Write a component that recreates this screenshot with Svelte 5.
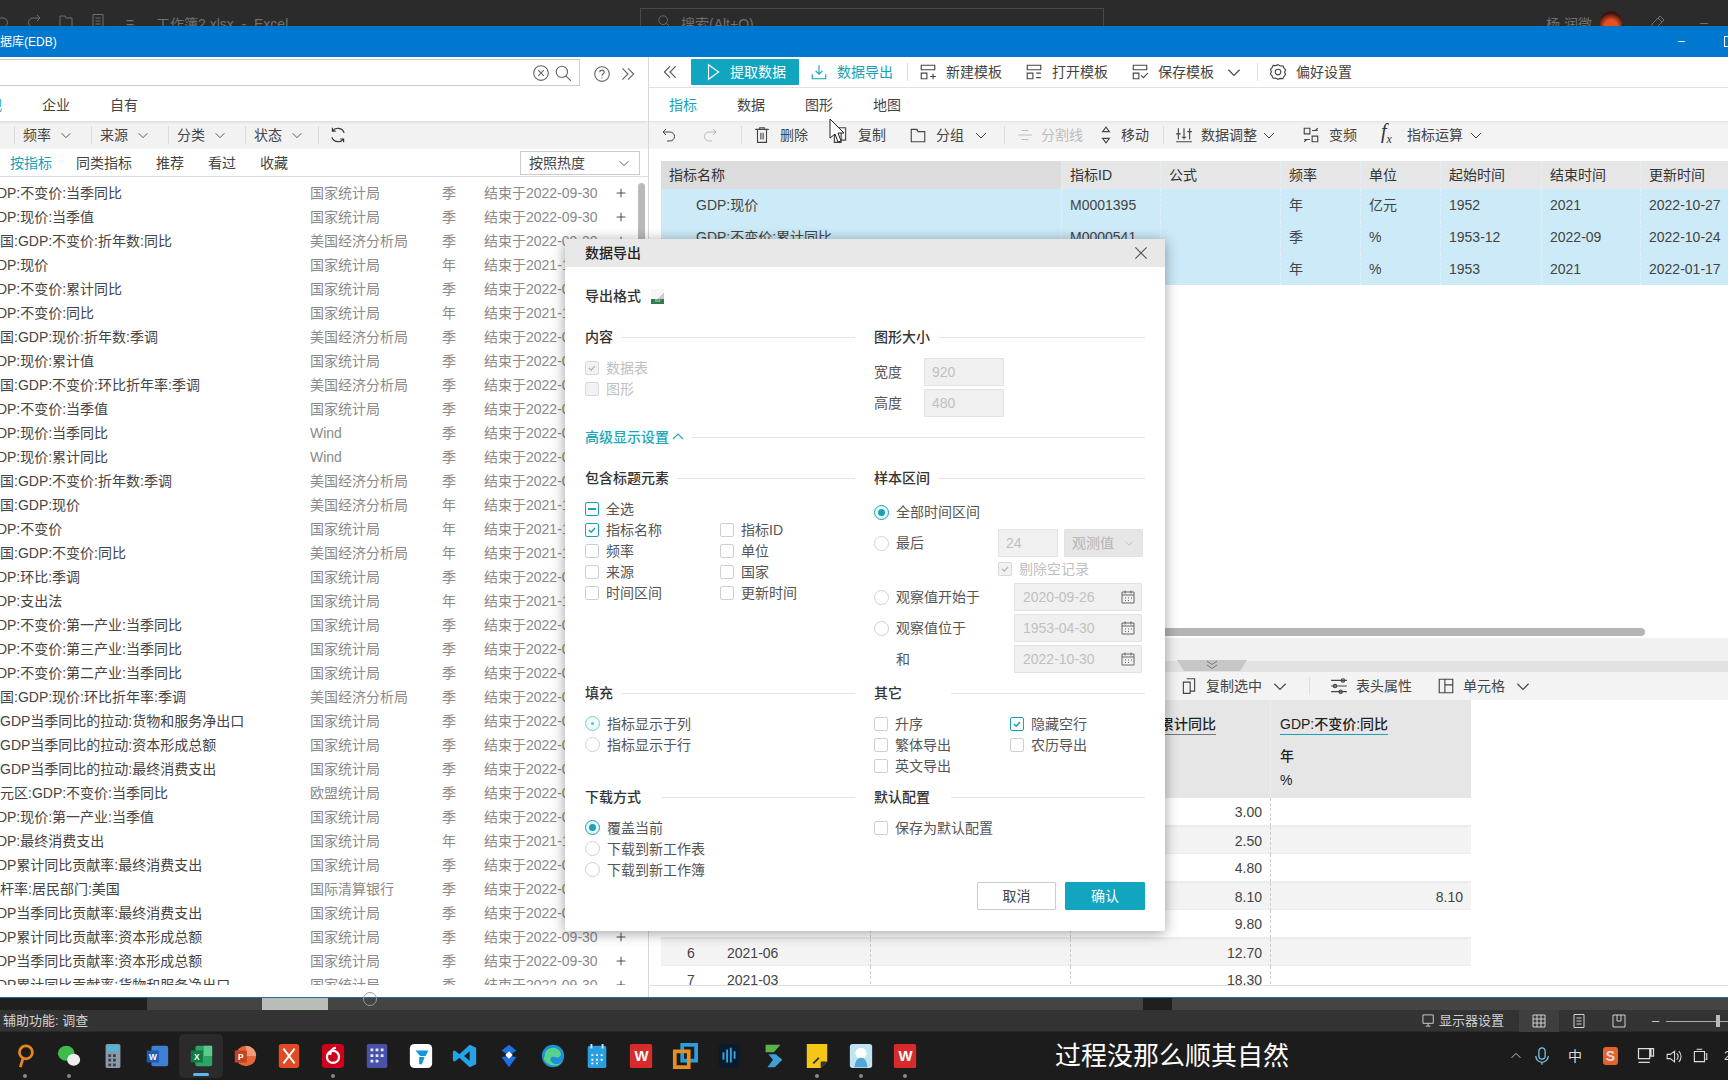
<script>
  const guo = '国家统计局', mei = '美国经济分析局';
  const names = [
    ['GDP:不变价:当季同比',guo,'季'],['GDP:现价:当季值',guo,'季'],['美国:GDP:不变价:折年数:同比',mei,'季'],['GDP:现价',guo,'年'],
    ['GDP:不变价:累计同比',guo,'季'],['GDP:不变价:同比',guo,'年'],['美国:GDP:现价:折年数:季调',mei,'季'],['GDP:现价:累计值',guo,'季'],
    ['美国:GDP:不变价:环比折年率:季调',mei,'季'],['GDP:不变价:当季值',guo,'季'],['GDP:现价:当季同比','Wind','季'],['GDP:现价:累计同比','Wind','季'],
    ['美国:GDP:不变价:折年数:季调',mei,'季'],['美国:GDP:现价',mei,'年'],['GDP:不变价',guo,'年'],['美国:GDP:不变价:同比',mei,'年'],
    ['GDP:环比:季调',guo,'季'],['GDP:支出法',guo,'年'],['GDP:不变价:第一产业:当季同比',guo,'季'],['GDP:不变价:第三产业:当季同比',guo,'季'],
    ['GDP:不变价:第二产业:当季同比',guo,'季'],['美国:GDP:现价:环比折年率:季调',mei,'季'],['GDP当季同比的拉动:货物和服务净出口',guo,'季',1],
    ['GDP当季同比的拉动:资本形成总额',guo,'季',1],['GDP当季同比的拉动:最终消费支出',guo,'季',1],['欧元区:GDP:不变价:当季同比','欧盟统计局','季'],
    ['GDP:现价:第一产业:当季值',guo,'季'],['GDP:最终消费支出',guo,'年'],['GDP累计同比贡献率:最终消费支出',guo,'季'],['杠杆率:居民部门:美国','国际清算银行','季'],
    ['GDP当季同比贡献率:最终消费支出',guo,'季'],['GDP累计同比贡献率:资本形成总额',guo,'季'],['GDP当季同比贡献率:资本形成总额',guo,'季'],['GDP累计同比贡献率:货物和服务净出口',guo,'季']
  ];
  const selRows = [
    ['GDP:现价','M0001395','','年','亿元','1952','2021','2022-10-27'],
    ['GDP:不变价:累计同比','M0000541','','季','%','1953-12','2022-09','2022-10-24'],
    ['GDP:不变价:同比','M0001396','','年','%','1953','2021','2022-01-17']
  ];
  const dataRows = [
    [1,'2022-09','3.00',''],[2,'2022-06','2.50',''],[3,'2022-03','4.80',''],[4,'2021-12','8.10','8.10'],
    [5,'2021-09','9.80',''],[6,'2021-06','12.70',''],[7,'2021-03','18.30','']
  ];
  const P = {
    chev:'M3 6l5 5 5-5', chevUp:'M3 10l5-5 5 5',
    back:'M8 3L3 8l5 5M13 3L8 8l5 5', fwd:'M3 3l5 5-5 5M8 3l5 5-5 5',
    play:'M4 1.500l9 6.500-9 6.500z', down:'M8 2v8M5 7l3 3 3-3M2 10v4h12v-4',
    newT:'M2 2h12v4H2zM2 9h5v5H2zM10 12h5M12.500 9.500v5', openT:'M2 2h12v4H2zM2 9h5v5H2zM10 9h4M10 13h4',
    saveT:'M2 2h12v4H2zM2 9h5v5H2zM9 11l2 2 4-4',
    gear:'M8 1.500l2 1.200 2.300-.2 1 2 1.500 1.700-1 2 1 2-1.500 1.700-1 2-2.300-.2L8 14.500l-2-1.200-2.300.2-1-2L1.200 9.800l1-2-1-2 1.500-1.700 1-2 2.300.2zM8 5.500a2.500 2.500 0 100 5 2.500 2.500 0 000-5z',
    undo:'M5 2L2 5l3 3M2 5h7a4 4 0 010 9H6', redo:'M11 2l3 3-3 3M14 5H7a4 4 0 000 9h3',
    trash:'M2 3h12M6 3V1.500h4V3M4 3v11.500h8V3M7 6v6M9 6v6', copy:'M6 1.500h7v11H9M3 4.500h6v10H3z',
    folder:'M2 3h5l1 2h6v9H2z', split:'M2 8h12M5 4h6M5 12h6', move:'M8 1L5 5h6zM8 15l-3-4h6z',
    adjust:'M3 2v10M8 2v10M13 2v10M1 7h4M6 10h4M11 5h4M1 14h14', freq:'M2 2h5v5H2zM9 9h5v5H9zM9 4h5M2 12h5M12 4l2-2M4 12l-2 2',
    sliders:'M1 3h14M1 8h14M1 13h14M10 3a1.500 1.500 0 113 0 1.500 1.500 0 01-3 0zM3 8a1.500 1.500 0 113 0 1.500 1.500 0 01-3 0zM8 13a1.500 1.500 0 113 0 1.500 1.500 0 01-3 0z',
    cell:'M2 2h12v12H2zM7 2v12M7 7h7', refresh:'M13.500 6A6 6 0 003 4.500M2.500 10A6 6 0 0013 11.500M3 1.500v3h3M13 14.500v-3h-3',
    search:'M7 2a5 5 0 100 10A5 5 0 007 2zM10.500 10.500L15 15', clear:'M8 1.500a6.500 6.500 0 100 13 6.500 6.500 0 000-13zM5.500 5.500l5 5M10.500 5.500l-5 5',
    help:'M8 1.500a6.500 6.500 0 100 13 6.500 6.500 0 000-13zM6 6.500a2 2 0 114 0c0 1.200-2 1.500-2 3M8 11v1', close:'M3 3l10 10M13 3L3 13',
    cal:'M2 3h12v11H2zM2 6h12M5 1.500v3M11 1.500v3M5 9h1M8 9h1M11 9h1M5 11.500h1M8 11.500h1',
    plus:'M8 3v10M3 8h10', grid:'M2 2h12v12H2zM2 6h12M2 10h12M6 2v12M10 2v12', page:'M3 1.500h10v13H3zM5.500 5h5M5.500 8h5M5.500 11h5', book:'M2 2h12v12H2zM6 2v6h4V2',
    monitor:'M1 2h11v9H1zM4 14h5M6.500 11v3', mon2:'M2 2h9v8H2zM2 13h9M12 2h2v6h-2z', spk:'M2 6h3l4-3v10l-4-3H2zM11 5a4 4 0 010 6M13 3a7 7 0 010 10', batt:'M3 4h9v9H3zM5 2h5M13 6h1v5h-1', mic:'M8 1.500a2.500 2.500 0 00-2.500 2.500v4a2.500 2.500 0 005 0V4A2.500 2.500 0 008 1.500zM3 8a5 5 0 0010 0M8 13v2',
    pen:'M10 2l4 4-8 8H2v-4zM8 4l4 4', qsearch:'M7 2a5 5 0 100 10A5 5 0 007 2zM10.500 10.500L15 15'
  };
</script>

{#snippet ic(n, s = 16)}
  <svg class="ic" width={s} height={s} viewBox="0 0 16 16"><path d={P[n]} /></svg>
{/snippet}
{#snippet tool(n, label, cls = '')}
  <span class="tool {cls}">{@render ic(n, 18)}<span>{label}</span></span>
{/snippet}
{#snippet fx()}
  <span class="tool fxt"><i class="fx">f<sub>x</sub></i><span>指标运算</span></span>
{/snippet}
{#snippet cb(label, state = '', dis = false)}
  <label class="opt" class:dis><span class="box {state}" class:disb={dis}>
    {#if state === 'on'}<svg viewBox="0 0 12 12"><path d="M3 6l2.200 2.200L9 4" /></svg>{/if}
    {#if state === 'mix'}<b></b>{/if}
  </span>{label}</label>
{/snippet}
{#snippet rd(label, on = '')}
  <label class="opt"><span class="radio {on}"></span>{label}</label>
{/snippet}
{#snippet sec(t, cls = '')}
  <div class="sec {cls}"><span>{t}</span><i></i></div>
{/snippet}
{#snippet date(v)}
  <span class="inp date"><span>{v}</span>{@render ic('cal', 16)}</span>
{/snippet}

<div class="screen">
  <header class="xl">
    <span class="qa">{@render ic('undo')}{@render ic('redo')}{@render ic('folder')}{@render ic('page')}<span class="eq">=</span></span>
    <span class="fn">工作簿2.xlsx  -  Excel</span>
    <span class="xsearch">{@render ic('qsearch', 14)}<span>搜索(Alt+Q)</span></span>
    <span class="user">杨 润微</span><span class="avatar"></span>
    <span class="pen">{@render ic('pen')}</span><span class="min">–</span>
  </header>

  <div class="titlebar">
    <span class="ttl">数据库(EDB)</span>
    <span class="winbtn">–</span><span class="restore"></span>
  </div>

  <main class="win">
    <section class="left">
      <div class="searchrow">
        <div class="searchbox">{@render ic('clear', 18)}{@render ic('search', 18)}</div>
        <span class="hicon">{@render ic('help', 18)}</span><span class="hicon fw">{@render ic('fwd', 18)}</span>
      </div>
      <nav class="ltabs"><span class="cur">观</span><span>企业</span><span>自有</span></nav>
      <div class="filters">
        {#each ['频率','来源','分类','状态'] as f}
          <span class="filter">{f}{@render ic('chev', 14)}</span>
        {/each}
        <span class="refresh">{@render ic('refresh', 18)}</span>
      </div>
      <div class="subtabs">
        <span class="cur">按指标</span><span>同类指标</span><span>推荐</span><span>看过</span><span>收藏</span>
        <span class="sortsel">按照热度{@render ic('chev', 14)}</span>
      </div>
      <div class="list">
        {#each names as r}
          <div class="lrow">
            <span class="n" class:shift={r[3]}>{r[0]}</span>
            <span>{r[1]}</span><span>{r[2]}</span>
            <span>结束于{r[2] === '年' ? '2021-12-31' : '2022-09-30'}</span>
            <span class="pl">{@render ic('plus', 14)}</span>
          </div>
        {/each}
        <span class="lthumb"></span>
      </div>
    </section>

    <section class="right">
      <div class="tb1">
        <span class="backb">{@render ic('back', 18)}</span>
        <span class="fetch">{@render ic('play', 18)}提取数据</span>
        <span class="tool teal">{@render ic('down', 18)}<span>数据导出</span></span>
        <i class="vs"></i>
        {@render tool('newT','新建模板')}
        {@render tool('openT','打开模板')}
        {@render tool('saveT','保存模板')}
        <span class="chv">{@render ic('chev', 18)}</span>
        <i class="vs"></i>
        {@render tool('gear','偏好设置')}
      </div>
      <nav class="rtabs"><span class="cur">指标</span><span>数据</span><span>图形</span><span>地图</span></nav>
      <div class="tb2">
        <span class="undo">{@render ic('undo')}</span><span class="redo">{@render ic('redo')}</span>
        <i class="vs"></i>
        {@render tool('trash','删除')}
        {@render tool('copy','复制')}
        {@render tool('folder','分组')}
        <span class="chv c1">{@render ic('chev')}</span>
        <i class="vs"></i>
        {@render tool('split','分割线','off')}
        {@render tool('move','移动','mv')}
        <i class="vs"></i>
        {@render tool('adjust','数据调整','adj')}
        <span class="chv c2">{@render ic('chev')}</span>
        {@render tool('freq','变频')}
        {@render fx()}
        <span class="chv c3">{@render ic('chev')}</span>
      </div>

      <div class="seltable">
        <div class="srow head">
          <span class="first">指标名称</span><span>指标ID</span><span>公式</span><span>频率</span><span>单位</span><span>起始时间</span><span>结束时间</span><span>更新时间</span>
        </div>
        {#each selRows as r}
          <div class="srow sel2">
            <span class="nm">{r[0]}</span>
            {#each r.slice(1) as c}<span>{c}</span>{/each}
          </div>
        {/each}
      </div>

      <div class="hscroll"><i></i></div>
      <div class="splitter"><span class="grip"><svg width="14" height="10" viewBox="0 0 14 10"><path d="M2 1l5 3.500L12 1M2 5l5 3.500L12 5" /></svg></span></div>
      <div class="tb3">
        {@render tool('copy','复制选中')}
        <span class="chv">{@render ic('chev', 18)}</span>
        <i class="vs"></i>
        {@render tool('sliders','表头属性')}
        {@render tool('cell','单元格')}
        <span class="chv">{@render ic('chev', 18)}</span>
      </div>
      <div class="datatable">
        <div class="drow dhead">
          <span></span><span></span><span></span>
          <span class="hcell"><u>GDP:不变价:累计同比</u><em>季</em><em>%</em></span>
          <span class="hcell"><u class="act">GDP:不变价:同比</u><em>年</em><em>%</em></span>
        </div>
        {#each dataRows as r, i}
          <div class="drow body" class:alt={i % 2 === 1}>
            <span class="idx">{r[0]}</span><span>{r[1]}</span><span></span>
            <span class="num">{r[2]}</span><span class="num">{r[3]}</span>
          </div>
        {/each}
      </div>
    </section>
  </main>

  <div class="strip">
    <i class="s1"></i><i class="s2"><b></b><em></em></i><i class="s3"></i><i class="s4"></i>
  </div>

  <div class="status">
    <span class="acc">辅助功能: 调查</span>
    <span class="disp">{@render ic('monitor', 15)}显示器设置</span>
    <span class="view on">{@render ic('grid', 16)}</span><span class="view">{@render ic('page', 16)}</span><span class="view">{@render ic('book', 16)}</span>
    <span class="zoom"><b>–</b><i></i><em></em></span>
  </div>

  <footer class="task">
    <div class="apps">
      <span class="app dot"><svg viewBox="0 0 28 28"><circle cx="15" cy="10" r="7" fill="none" stroke="#e8861e" stroke-width="3"/><path d="M12 16l-3 10" stroke="#e8861e" stroke-width="3"/></svg></span>
      <span class="app dot"><svg viewBox="0 0 28 28"><ellipse cx="11" cy="11" rx="9" ry="8" fill="#3dbb4b"/><ellipse cx="19" cy="18" rx="7" ry="6.500" fill="#eee"/></svg></span>
      <span class="app"><svg viewBox="0 0 28 28"><rect x="6" y="1" width="16" height="26" rx="2" fill="#8b9aa6"/><rect x="8" y="3" width="12" height="6" fill="#49b8e0"/><path d="M9 12h3v3H9zM14 12h3v3h-3zM9 17h3v3H9zM14 17h3v3h-3zM9 22h3v3H9zM14 22h3v3h-3z" fill="#3a3f44"/></svg></span>
      <span class="app"><svg viewBox="0 0 28 28"><rect x="8" y="3" width="18" height="22" rx="2" fill="#3f7fd6"/><rect x="3" y="8" width="13" height="13" fill="#1c5cb5"/><text x="9.500" y="18" class="lt">W</text></svg></span>
      <span class="app active"><svg viewBox="0 0 28 28"><rect x="8" y="3" width="18" height="22" rx="2" fill="#2aa566"/><rect x="17" y="3" width="9" height="11" fill="#5cc98d"/><rect x="3" y="8" width="13" height="13" fill="#107c41"/><text x="9.500" y="18" class="lt">X</text></svg></span>
      <span class="app"><svg viewBox="0 0 28 28"><circle cx="15" cy="14" r="11" fill="#e2683a"/><path d="M15 3a11 11 0 0111 11H15z" fill="#f09a79"/><rect x="3" y="8" width="13" height="13" fill="#c3421f"/><text x="9.500" y="18" class="lt">P</text></svg></span>
      <span class="app"><svg viewBox="0 0 28 28"><rect x="3" y="1" width="22" height="26" rx="3" fill="#e04a24"/><path d="M8 6l12 16M20 6L8 22" stroke="#fff" stroke-width="2" fill="none"/></svg></span>
      <span class="app dot"><svg viewBox="0 0 28 28"><rect x="2" y="1" width="24" height="26" rx="4" fill="#d0021b"/><circle cx="14" cy="15" r="6.500" fill="none" stroke="#fff" stroke-width="2.400"/><path d="M17 5c-4 1-6 4-6 8" stroke="#fff" stroke-width="2.400" fill="none"/></svg></span>
      <span class="app"><svg viewBox="0 0 28 28"><rect x="3" y="1" width="22" height="26" rx="2" fill="#4752a8"/><path d="M7 6h3v3H7zM12.500 6h3v3h-3zM18 6h3v3h-3zM7 12h3v3H7zM12.500 12h3v3h-3zM18 12h3v3h-3zM7 18h3v3H7zM12.500 18h3v3h-3z" fill="#e6e8f5"/></svg></span>
      <span class="app"><svg viewBox="0 0 28 28"><rect x="2" y="1" width="24" height="26" rx="5" fill="#fff"/><path d="M8 8h14l-3 6h-6zM12 15h6l-3 8h-3z" fill="#1296db"/></svg></span>
      <span class="app"><svg viewBox="0 0 28 28"><path d="M19 2l7 3v18l-7 3-11-10-5 4-2-1V9l2-1 5 4zM19 9l-6 5 6 5z" fill="#23a3e8"/></svg></span>
      <span class="app"><svg viewBox="0 0 28 28"><path d="M14 2l8 6-8 6-8-6zM6 15l8-1 8 1-8 11z" fill="#1e6fe0"/><path d="M14 9l4 4-4 4-4-4z" fill="#fff"/></svg></span>
      <span class="app"><svg viewBox="0 0 28 28"><circle cx="14" cy="14" r="12" fill="#1f8fd6"/><path d="M5 14a9 9 0 0117-4c2 4-2 7-6 5-4-1-7 2-3 6 3 3 9 2 12-2a12 12 0 01-21-2z" fill="#56d48c"/></svg></span>
      <span class="app"><svg viewBox="0 0 28 28"><rect x="4" y="3" width="20" height="24" rx="2" fill="#2a9fe0"/><path d="M8 1v5M20 1v5" stroke="#cfe9f8" stroke-width="2"/><path d="M8 12h2v2H8zM13 12h2v2h-2zM18 12h2v2h-2zM8 17h2v2H8zM13 17h2v2h-2zM18 17h2v2h-2zM8 21h2v2H8zM13 21h2v2h-2z" fill="#fff"/></svg></span>
      <span class="app"><svg viewBox="0 0 28 28"><rect x="2" y="1" width="24" height="26" rx="2" fill="#d92b2b"/><text x="7" y="19" class="lt big">W</text></svg></span>
      <span class="app"><svg viewBox="0 0 28 28"><rect x="11" y="2" width="15" height="17" fill="none" stroke="#2a9fe0" stroke-width="4"/><rect x="3" y="9" width="15" height="17" fill="none" stroke="#e8901e" stroke-width="4"/></svg></span>
      <span class="app"><svg viewBox="0 0 28 28"><rect x="3" y="1" width="22" height="26" rx="4" fill="#0c1a2e"/><path d="M8 10v8M12 7v14M16 5v16M20 9v8" stroke="#32a7e0" stroke-width="2"/></svg></span>
      <span class="app"><svg viewBox="0 0 28 28"><path d="M6 2h16l-7 8H6z" fill="#5db04a"/><path d="M9 12h8l7 6-8 8H8l6-8z" fill="#3d9fd6"/></svg></span>
      <span class="app dot"><svg viewBox="0 0 28 28"><path d="M3 1h22v19l-7 7H3z" fill="#f5c518"/><path d="M18 27v-7h7z" fill="#333"/><path d="M10 22l6-6" stroke="#333" stroke-width="2"/></svg></span>
      <span class="app dot"><svg viewBox="0 0 28 28"><rect x="2" y="1" width="24" height="26" rx="3" fill="#bfe4f4"/><circle cx="14" cy="11" r="6" fill="#fff"/><path d="M7 26c1-8 4-10 7-10s6 2 7 10z" fill="#55a6d6"/></svg></span>
      <span class="app dot"><svg viewBox="0 0 28 28"><rect x="2" y="1" width="24" height="26" rx="2" fill="#d92b2b"/><text x="7" y="19" class="lt big">W</text></svg></span>
    </div>
    <span class="sub">过程没那么顺其自然</span>
    <div class="tray">
      {@render ic('chevUp', 14)}
      <span class="micic">{@render ic('mic', 20)}</span>
      <span class="zh">中</span>
      <span class="sogou">S</span>
      {@render ic('mon2', 20)}{@render ic('spk', 17)}{@render ic('batt', 18)}
      <span class="clock">2</span>
    </div>
  </footer>

  <div class="dialog">
    <div class="dhd"><span>数据导出</span>{@render ic('close', 18)}</div>
    <div class="dbody">
      <div class="fmt">导出格式<span class="xls"><i>XLS</i></span></div>
      <div class="grp g1">
        <div>
          {@render sec('内容')}
          <div class="opts">{@render cb('数据表','on',true)}{@render cb('图形','',true)}</div>
        </div>
        <div>
          {@render sec('图形大小')}
          <div class="sizes">
            <div class="sz">宽度<span class="inp w80">920</span></div>
            <div class="sz">高度<span class="inp w80">480</span></div>
          </div>
        </div>
      </div>
      <div class="adv"><span>高级显示设置</span>{@render ic('chevUp', 16)}<i></i></div>
      <div class="grp g2">
        <div>
          {@render sec('包含标题元素')}
          <div class="opts">
            {@render cb('全选','mix')}
            <div class="two w135">
              {@render cb('指标名称','on')}{@render cb('指标ID')}
              {@render cb('频率')}{@render cb('单位')}
              {@render cb('来源')}{@render cb('国家')}
              {@render cb('时间区间')}{@render cb('更新时间')}
            </div>
          </div>
        </div>
        <div>
          {@render sec('样本区间')}
          <div class="range">
            <div class="rr">{@render rd('全部时间区间','rsel')}</div>
            <div class="rr gap3">{@render rd('最后')}<span class="inp n24">24</span><span class="inp obs">观测值{@render ic('chev', 12)}</span></div>
            <div class="rr ck">{@render cb('剔除空记录','on',true)}</div>
            <div class="rr gap3">{@render rd('观察值开始于')}{@render date('2020-09-26')}</div>
            <div class="rr gap3">{@render rd('观察值位于')}{@render date('1953-04-30')}</div>
            <div class="rr gap3"><span class="he">和</span>{@render date('2022-10-30')}</div>
          </div>
        </div>
      </div>
      <div class="grp g3">
        <div>
          {@render sec('填充')}
          <div class="opts">{@render rd('指标显示于列','lite')}{@render rd('指标显示于行')}</div>
        </div>
        <div>
          {@render sec('其它','wide')}
          <div class="opts two w136">
            {@render cb('升序')}{@render cb('隐藏空行','on')}
            {@render cb('繁体导出')}{@render cb('农历导出')}
            {@render cb('英文导出')}
          </div>
        </div>
      </div>
      <div class="grp g4">
        <div>
          {@render sec('下载方式','mid')}
          <div class="opts">{@render rd('覆盖当前','rsel')}{@render rd('下载到新工作表')}{@render rd('下载到新工作簿')}</div>
        </div>
        <div>
          {@render sec('默认配置','mid')}
          <div class="opts">{@render cb('保存为默认配置')}</div>
        </div>
      </div>
      <div class="foot"><span class="btn">取消</span><span class="btn pri">确认</span></div>
    </div>
  </div>

  <svg class="cursor" width="18" height="26" viewBox="0 0 18 26"><path d="M1 1v19l5-4 3 8 3-1-3-8h6z" fill="#fff" stroke="#222" /></svg>
</div>

<style>
  :global(body) { margin: 0; background: #222; }
  .screen {
    position: relative; width: 1728px; height: 1080px; overflow: hidden;
    display: grid; grid-template-rows: 26px 31px 940px 13px 22px 48px;
    font: 14px/20px "Liberation Sans", "Noto Sans CJK SC", sans-serif; color: #444;
  }
  .ic { fill: none; stroke: currentColor; stroke-width: 1; flex: none; display: block; }
  i, em { font-style: normal; }

  .xl { background: #2b2b2b; color: #707070; display: flex; align-items: flex-start; overflow: hidden; padding-top: 13px; position: relative; }
  .qa { display: flex; gap: 16px; margin-left: -6px; width: 162px; }
  .eq { margin-left: 4px; }
  .fn { width: 480px; line-height: 18px; white-space: pre; margin-top: 2px; }
  .xsearch { position: absolute; left: 640px; top: 8px; width: 464px; height: 30px; border: 1px solid #484848; display: flex; gap: 10px; padding: 5px 0 0 16px; box-sizing: border-box; }
  .user { position: absolute; left: 1546px; top: 14px; }
  .avatar { position: absolute; left: 1600px; top: 11px; width: 22px; height: 24px; border-radius: 50%; background: radial-gradient(circle at 50% 65%, #e8501e 0 35%, #3a1410 70%); }
  .pen { position: absolute; left: 1650px; top: 14px; }
  .min { position: absolute; left: 1700px; top: 12px; }

  .titlebar { background: #0078d0; color: #fff; display: flex; align-items: center; font-size: 12px; position: relative; }
  .ttl { margin-left: -12px; }
  .winbtn { position: absolute; left: 1678px; top: 5px; }
  .restore { position: absolute; left: 1724px; top: 10px; width: 9px; height: 9px; border: 1px solid #fff; }

  .win { background: #fff; display: grid; grid-template-columns: 649px 1fr; min-height: 0; overflow: hidden; }
  .left { position: relative; border-right: 1px solid #d8d8d8; min-width: 0; overflow: hidden; }
  .searchrow { height: 29px; padding-top: 2px; box-sizing: border-box; display: flex; align-items: flex-start; }
  .searchbox { width: 580px; height: 27px; box-sizing: border-box; border: 1px solid #ccc; border-left: 0; display: flex; justify-content: flex-end; align-items: center; gap: 4px; padding-right: 7px; color: #666; }
  .hicon { margin: 6px 0 0 13px; color: #666; }
  .hicon.fw { margin-left: 8px; }
  .ltabs { height: 35px; display: flex; align-items: center; gap: 40px; margin-left: -12px; box-shadow: 0 2px 3px -1px rgba(0,0,0,.12); position: relative; color: #444; padding-top: 3px; box-sizing: border-box; }
  .cur { color: #17a2b8; }
  .filters { height: 28px; background: #f2f2f2; display: flex; align-items: center; padding-left: 14px; }
  .filter { width: 77px; box-sizing: border-box; border-left: 1px solid #ddd; padding-left: 8px; display: flex; align-items: center; gap: 8px; height: 18px; line-height: 18px; }
  .filter:nth-child(4) { width: 73px; }
  .refresh { border-left: 1px solid #ddd; padding-left: 10px; height: 18px; display: flex; align-items: center; color: #333; }
  .subtabs { height: 28px; display: flex; align-items: center; gap: 24px; padding-left: 10px; border-bottom: 1px solid #ddd; box-sizing: border-box; position: relative; }
  .sortsel { position: absolute; left: 520px; top: 2px; width: 120px; height: 24px; box-sizing: border-box; border: 1px solid #ccc; display: flex; align-items: center; justify-content: space-between; padding: 0 8px; }
  .list { position: relative; height: 808px; overflow: hidden; margin-left: -14px; padding-top: 4px; box-sizing: border-box; }
  .lrow { height: 24px; display: grid; grid-template-columns: 324px 132px 42px 130px 20px; align-items: center; color: #8a8a8a; white-space: nowrap; }
  .lrow .n { color: #444; }
  .n.shift { padding-left: 14px; }
  .pl { color: #333; margin-left: 0; }
  .lthumb { position: absolute; left: 652px; top: 6px; width: 7px; height: 230px; border-radius: 4px; background: #b9b9b9; }

  .right { min-width: 0; overflow: hidden; position: relative; }
  .tb1 { height: 31px; display: flex; align-items: center; padding-left: 12px; border-bottom: 1px solid #e2e2e2; box-sizing: border-box; }
  .backb { color: #555; width: 30px; }
  .fetch { width: 108px; height: 26px; margin-right: 12px; background: #12a5bf; color: #fff; display: flex; align-items: center; justify-content: center; gap: 8px; border-radius: 1px; }
  .tool { display: inline-flex; align-items: center; gap: 10px; color: #444; margin-right: 24px; white-space: nowrap; }
  .tool > .ic { margin: 0 -1px; }
  .tool.teal { color: #17a2b8; margin-right: 14px; }
  .tool.off { color: #bdbdbd; }
  .vs { width: 1px; height: 18px; background: #ddd; margin-right: 12px; flex: none; }
  .chv { color: #444; margin: 0 14px 0 -13px; display: flex; }
  .rtabs { height: 33px; display: flex; align-items: center; gap: 40px; padding-left: 20px; }
  .tb2 { height: 28px; background: #f3f3f3; display: flex; align-items: center; padding-left: 12px; box-shadow: inset 0 3px 3px -2px rgba(0,0,0,.08); }
  .undo { margin-right: 25px; color: #444; }
  .redo { margin-right: 23px; color: #bbb; }
  .tb2 .vs { margin-right: 12px; }
  .tb2 .tool.off { gap: 8px; margin-right: 15px; }
  .tb2 .tool.mv { gap: 7px; margin-right: 14px; }
  .tb2 .tool.adj { gap: 9px; }
  .tb2 .fxt { gap: 6px; margin-right: 24px; }
  .tb2 .chv.c1 { margin: 0 15px 0 -15px; }
  .tb2 .chv.c2 { margin: 0 26px 0 -20px; }
  .tb2 .chv.c3 { margin: 0 0 0 -19px; }
  .fx { font: italic 20px/16px "Liberation Serif", serif; width: 20px; color: #333; }
  .fx sub { font-size: 12px; }

  .seltable { margin: 12px 0 0 12px; height: 125px; width: 1100px; }
  .srow { display: grid; grid-template-columns: 400px 99px 120px 80px 80px 101px 99px 100px; }
  .srow span { padding-left: 8px; white-space: nowrap; overflow: hidden; }
  .head { height: 28px; line-height: 28px; background: #e6e6e6; color: #333; }
  .head .first { background: #dcdcdc; }
  .sel2 { height: 32px; line-height: 32px; background: #cdeaf8; color: #444; }
  .sel2 .nm { padding-left: 35px; }
  .sel2 span + span, .head span + span { border-left: 1px dashed #e0f0f8; }
  .hscroll { height: 353px; position: relative; margin-bottom: -1px; }
  .hscroll i { position: absolute; left: 0; right: 93px; top: 342px; height: 8px; border-radius: 4px; background: #b4b4b4; }
  .splitter { height: 34px; background: linear-gradient(#f1f1f1 0 23px, #e2e2e2 23px); position: relative; }
  .grip { position: absolute; left: 528px; top: 22px; width: 70px; height: 11px; background: #c6c6c6; clip-path: polygon(0 0, 100% 0, 90% 100%, 10% 100%); display: flex; justify-content: center; }
  .grip path { fill: none; stroke: #777; }
  .tb3 { height: 28px; background: #f3f3f3; display: flex; align-items: center; padding-left: 532px; }
  .tb3 .tool { gap: 9px; margin-right: 26px; }
  .tb3 .chv { margin: 0 20px 0 -17px; }
  .tb3 .vs { margin-right: 21px; }
  .datatable { margin-left: 12px; width: 810px; height: 285px; overflow: hidden; }
  .drow { display: grid; grid-template-columns: 66px 143px 200px 200px 201px; }
  .dhead { height: 98px; background: #e6e6e6; color: #222; }
  .hcell { padding: 15px 0 0 9px; display: flex; flex-direction: column; align-items: flex-start; border-left: 1px solid #ececec; font-weight: 500; }
  .hcell u { text-decoration: none; border-bottom: 1px solid #777; line-height: 19px; margin-bottom: 9px; }
  .hcell u.act { border-color: #17a2b8; }
  .hcell em { line-height: 24px; }
  .body { height: 28px; line-height: 28px; box-sizing: border-box; border-bottom: 1px solid #eee; color: #444; }
  .body.alt { background: #f3f3f3; border-top: 1px dotted #ddd; }
  .body span:nth-child(3), .body span:nth-child(4), .body span:nth-child(5) { border-left: 1px dashed #ccc; }
  .idx { text-align: center; padding-right: 6px; }
  .num { text-align: right; padding-right: 8px; }
  .win::after { content: ''; position: absolute; left: 650px; right: 0; top: 985px; height: 1px; background: #ddd; }

  .strip { background: #444; border-top: 1px solid #2a6a9a; box-sizing: border-box; display: flex; }
  .s1 { width: 147px; background: #1f1f1f; }
  .s2 { width: 996px; position: relative; }
  .s2 b { position: absolute; left: 115px; top: 0; width: 66px; height: 12px; background: #b8bdb8; }
  .s2 em { position: absolute; left: 216px; top: -6px; width: 14px; height: 14px; border-radius: 50%; border: 1px solid #999; box-sizing: border-box; }
  .s3 { width: 29px; background: #1f1f1f; }
  .s4 { flex: 1; background: #444; }

  .status { background: #333; color: #d0d0d0; display: flex; align-items: center; position: relative; border-bottom: 1px solid #2a2a2a; box-sizing: border-box; font-size: 13px; padding-left: 3px; }
  .acc { width: 1420px; }
  .disp { display: flex; gap: 2px; align-items: center; width: 97px; flex: none; margin-left: -1px; }
  .view { width: 40px; height: 22px; display: flex; align-items: center; justify-content: center; flex: none; }
  .view.on { background: #3f3f3f; }
  .zoom { flex: none; width: 86px; display: flex; align-items: center; position: relative; margin-left: 13px; height: 22px; }
  .zoom b { font-weight: 400; }
  .zoom i { position: absolute; left: 14px; right: 0; top: 11px; height: 1px; background: #aaa; }
  .zoom em { position: absolute; left: 64px; top: 5px; width: 4px; height: 12px; background: #bbb; }

  .task { background: #1c1c1c; display: flex; align-items: center; position: relative; color: #fff; }
  .apps { display: flex; padding-left: 3px; width: 1052px; flex: none; }
  .app { width: 44px; height: 44px; display: flex; align-items: center; justify-content: center; position: relative; flex: none; }
  .app svg { width: 26px; height: 28px; }
  .app.dot::after { content: ''; position: absolute; left: 20px; bottom: 0; width: 4px; height: 4px; border-radius: 50%; background: #888; }
  .app.active { background: #2b2b2b; border-radius: 5px; }
  .app.active::after { content: ''; position: absolute; left: 14px; bottom: 2px; width: 16px; height: 3px; border-radius: 2px; background: #5fb7e8; }
  .lt { font: 700 9px "Liberation Sans", sans-serif; fill: #fff; text-anchor: middle; }
  .lt.big { font-size: 16px; text-anchor: start; }
  .sub { font-size: 26px; line-height: 32px; width: 454px; flex: none; white-space: nowrap; }
  .tray { display: flex; align-items: center; gap: 9px; color: #ddd; flex: none; }
  .micic { color: #7cc4e8; }
  .zh { font-size: 14px; margin: 0 12px 0 7px; }
  .sogou { width: 15px; height: 18px; background: #e5622a; border-radius: 3px; font: 700 14px/18px "Liberation Sans", sans-serif; text-align: center; margin-right: 9px; }
  .clock { font-size: 13px; margin-left: 6px; }

  .dialog { position: absolute; left: 565px; top: 239px; width: 600px; height: 692px; background: #fff; border-radius: 2px; box-shadow: 0 2px 14px rgba(0,0,0,.38); color: #555; }
  .dhd { height: 28px; background: #e8e8e8; display: flex; align-items: center; justify-content: space-between; padding: 0 15px 0 20px; color: #222; font-weight: 500; }
  .dhd .ic { color: #555; }
  .dbody { padding: 18px 20px 0; }
  .fmt { height: 22px; display: flex; align-items: center; gap: 10px; color: #333; font-weight: 500; margin-bottom: 19px; }
  .xls { width: 13px; height: 15px; background: linear-gradient(135deg, #f6f6f6 60%, #ccc 60%); position: relative; }
  .xls i { position: absolute; left: 0; right: 0; bottom: 0; height: 5px; background: #2f7d4c; color: #fff; font-size: 3px; line-height: 5px; text-align: center; }
  .grp { display: grid; grid-template-columns: 270px 271px; column-gap: 19px; }
  .g1 { height: 100px; } .g2 { height: 215px; } .g3 { height: 104px; } .g4 { height: 96px; }
  .sec { height: 22px; display: flex; align-items: center; gap: 8px; color: #333; font-weight: 500; }
  .sec.mid { gap: 21px; }
  .sec.wide { gap: 49px; }
  .sec i { flex: 1; height: 1px; background: #e4e4e4; }
  .adv { height: 22px; display: flex; align-items: center; color: #1fa7b8; margin-bottom: 19px; font-weight: 500; gap: 1px; }
  .adv .ic { margin-right: 5px; stroke-width: 1.200; }
  .adv i { flex: 1; height: 1px; background: #e4e4e4; }
  .opts { margin-top: 9px; }
  .opt { display: flex; align-items: center; gap: 7px; height: 21px; white-space: nowrap; flex: none; }
  .opt.dis { color: #c0c0c0; }
  .box { width: 14px; height: 14px; box-sizing: border-box; border: 1px solid #cfcfcf; border-radius: 2px; display: flex; align-items: center; justify-content: center; flex: none; }
  .box svg { width: 12px; height: 12px; fill: none; stroke: #17a2b8; stroke-width: 1.600; }
  .box.on, .box.mix { border-color: #17a2b8; }
  .box b { width: 8px; height: 2px; background: #17a2b8; }
  .box.disb { border-color: #d8d8d8; background: #f2f2f2; }
  .box.disb svg { stroke: #bbb; }
  .radio { width: 15px; height: 15px; box-sizing: border-box; border: 1px solid #d0d0d0; border-radius: 50%; flex: none; position: relative; }
  .radio.rsel { border-color: #17a2b8; background: #e9f7f9; }
  .radio.lite { border-color: #7fcad6; background: #eef9fa; }
  .radio.rsel::after, .radio.lite::after { content: ''; position: absolute; inset: 3px; border-radius: 50%; background: #17a2b8; }
  .radio.lite::after { inset: 5px; background: #6cbecb; }
  .two { display: grid; }
  .w135 { grid-template-columns: 135px 135px; }
  .w136 { grid-template-columns: 136px 135px; }
  .sizes { margin-top: 10px; display: grid; gap: 3px; }
  .sz { display: flex; align-items: center; gap: 22px; height: 28px; }
  .inp { height: 28px; box-sizing: border-box; background: #f0f0f0; border: 1px solid #e2e2e2; border-radius: 1px; color: #c0c0c0; display: inline-flex; align-items: center; padding-left: 7px; flex: none; }
  .w80 { width: 80px; }
  .range { margin-top: 9px; }
  .rr { display: flex; align-items: center; height: 28px; position: relative; }
  .rr.gap3 { margin-top: 3px; }
  .rr.ck { height: 22px; margin-top: 1px; padding-left: 124px; }
  .n24 { margin-left: auto; width: 60px; }
  .obs { width: 79px; margin-left: 6px; margin-right: 2px; background: #e6e6e6; justify-content: space-between; padding: 0 7px; color: #b5b5b5; }
  .date { margin-left: auto; margin-right: 3px; width: 128px; justify-content: space-between; padding: 0 5px 0 8px; }
  .date .ic { color: #666; }
  .he { padding-left: 22px; }
  .foot { display: flex; justify-content: flex-end; gap: 9px; }
  .btn { width: 79px; height: 28px; box-sizing: border-box; border: 1px solid #ccc; border-radius: 1px; display: flex; align-items: center; justify-content: center; color: #444; }
  .btn.pri { width: 80px; background: #12a5bf; border-color: #12a5bf; color: #fff; }

  .cursor { position: absolute; left: 829px; top: 118px; }
</style>
